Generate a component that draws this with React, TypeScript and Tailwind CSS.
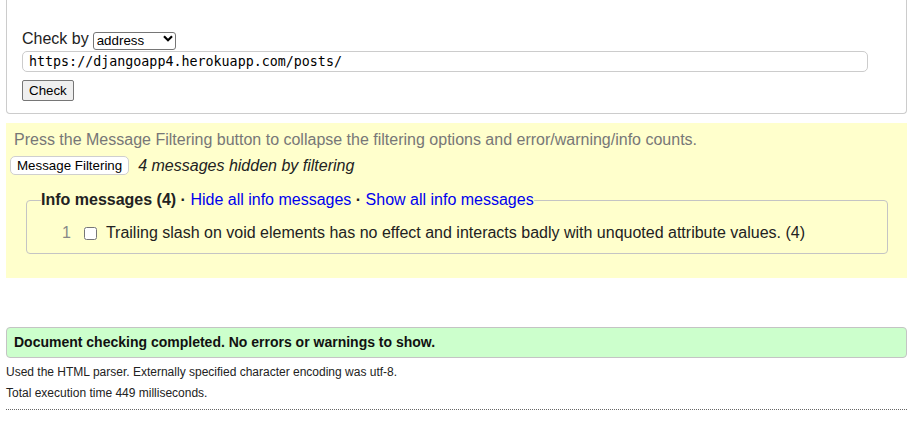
import * as React from "react";

function SelectBox() {
  return (
    <div className="relative ml-[4px] h-[18px] w-[83px]">
      <select
        defaultValue="address"
        className="h-full w-full appearance-none rounded-[3px] border border-[#767676] bg-white pl-[3px] text-[13.33px] leading-[16px] text-black"
      >
        <option value="address">address</option>
        <option value="file">file upload</option>
        <option value="text">text input</option>
      </select>
      <svg
        className="pointer-events-none absolute right-[3px] top-[5px]"
        width="10"
        height="7"
        viewBox="0 0 10 7"
        fill="none"
      >
        <path d="M1 1.2L5 5.2L9 1.2" stroke="#000" strokeWidth="2.2" />
      </svg>
    </div>
  );
}

function CheckForm() {
  return (
    <div className="ml-[6px] mr-[4px] rounded-b-[4px] border-x border-b border-[#cccccc] pb-[12px] pl-[15px] pr-[38px] pt-[29px]">
      <div className="flex h-[19px] items-center text-[16px] leading-[19px] text-[#222]">
        <span>Check by</span>
        <SelectBox />
      </div>
      <input
        type="text"
        defaultValue="https://djangoapp4.herokuapp.com/posts/"
        className="mt-[3px] block h-[21px] w-full rounded-[5px] border border-[#cccccc] bg-white px-[6px] text-[13.33px] text-black [font-family:'DejaVu_Sans_Mono',monospace]"
      />
      <div className="mt-[8px] flex">
        <button className="h-[21px] rounded-[2px] border border-[#767676] bg-[#efefef] px-[6px] text-[13.33px] leading-[17px] text-black">
          Check
        </button>
      </div>
    </div>
  );
}

function FilterPanel() {
  return (
    <div className="ml-[6px] mr-[4px] mt-[9px] bg-[#ffffcc] pb-[24px] pt-[8px]">
      <p className="pl-[8px] text-[16px] leading-[18px] text-[#777]">
        Press the Message Filtering button to collapse the filtering options and error/warning/info counts.
      </p>
      <div className="mt-[7px] flex h-[19px] items-center">
        <button className="ml-[4px] h-[19px] rounded-[5px] border border-[#cfcfcf] bg-white px-[6px] text-[13.33px] leading-[16px] text-black">
          Message Filtering
        </button>
        <span className="ml-[9px] text-[16px] italic text-[#222]">4 messages hidden by filtering</span>
      </div>
      <fieldset className="ml-[20px] mr-[19px] mt-[16px] rounded-[4px] border border-[#c4c4c4] px-[14px] pb-[11px] pt-[15px]">
        <legend className="text-[16px] leading-[18px] text-[#222]">
          <span className="font-bold">Info messages (4) · </span>
          <a href="#" className="text-[#0000ee]">Hide all info messages</a>
          <span className="font-bold"> · </span>
          <a href="#" className="text-[#0000ee]">Show all info messages</a>
        </legend>
        <div className="flex h-[18px] items-center pl-[21px] text-[16px] leading-[18px]">
          <span className="text-[#888]">1</span>
          <input type="checkbox" className="ml-[13px] h-[13px] w-[13px]" />
          <span className="ml-[9px] text-[#222]">
            Trailing slash on void elements has no effect and interacts badly with unquoted attribute values. (4)
          </span>
        </div>
      </fieldset>
    </div>
  );
}

function Results() {
  return (
    <div className="ml-[6px] mr-[4px]">
      <div className="mt-[49px] rounded-[4px] border border-[#c4c4c4] bg-[#ccffcc] px-[7px] py-[5px] text-[14px] font-bold leading-[19px] text-[#111]">
        Document checking completed. No errors or warnings to show.
      </div>
      <p className="mt-[7px] text-[12px] leading-[14px] text-[#222]">
        Used the HTML parser. Externally specified character encoding was utf-8.
      </p>
      <p className="mt-[7px] text-[12px] leading-[14px] text-[#222]">Total execution time 449 milliseconds.</p>
      <div className="mt-[9px] border-t border-dotted border-[#666]" />
    </div>
  );
}

export default function App() {
  return (
    <div className="min-h-[429px] bg-white pb-[20px] [font-family:'Liberation_Sans',Arial,sans-serif]">
      <CheckForm />
      <FilterPanel />
      <Results />
    </div>
  );
}
